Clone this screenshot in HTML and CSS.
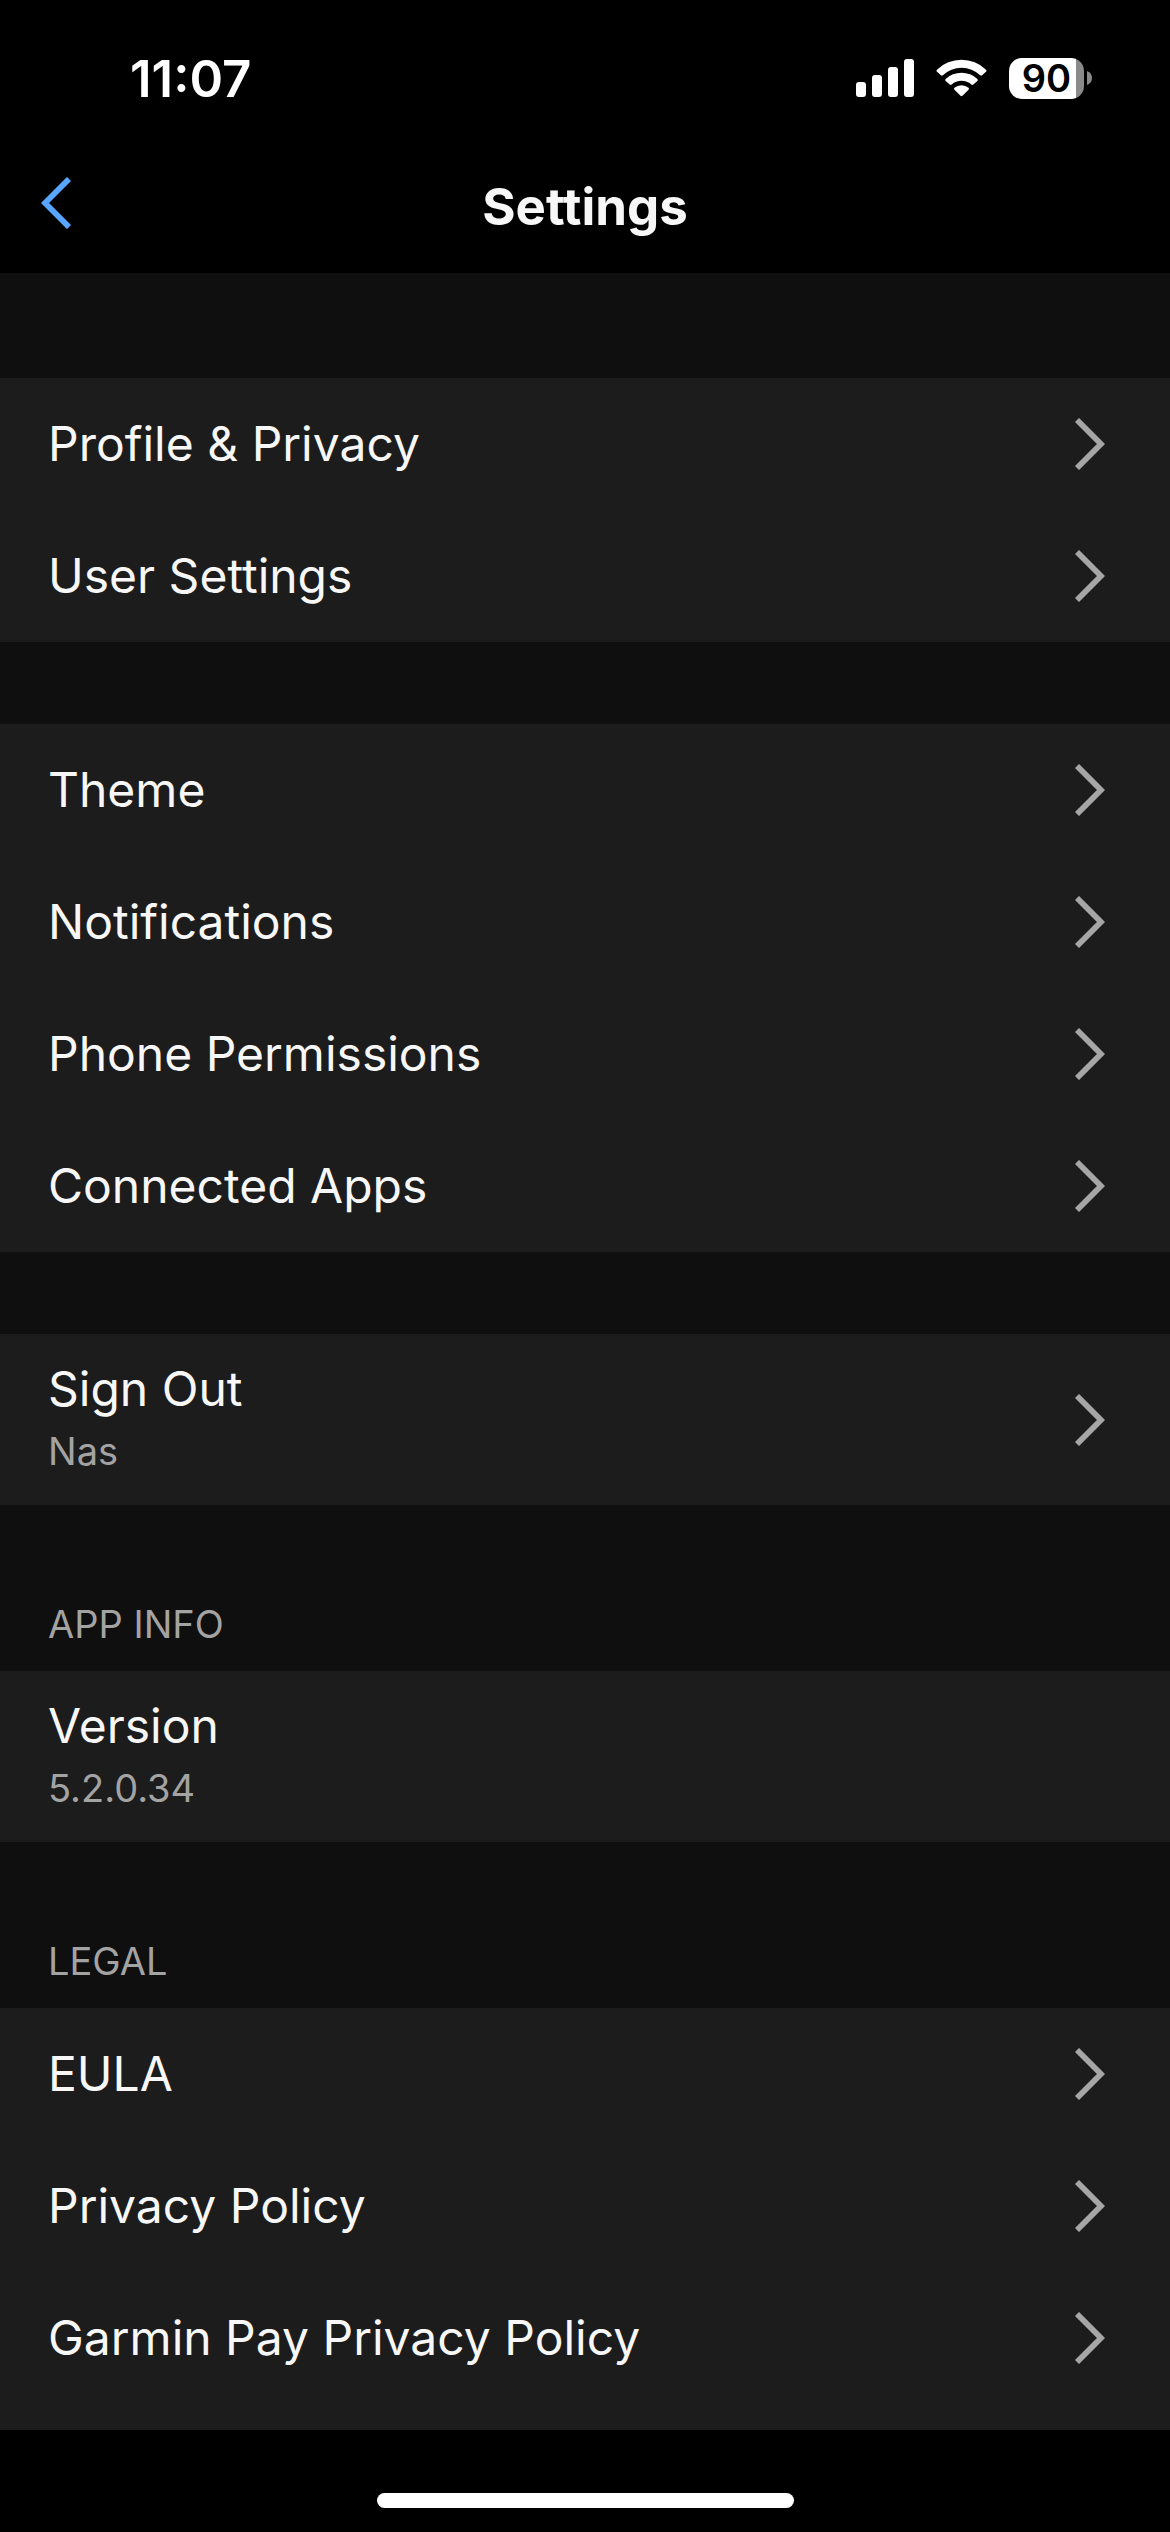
FILE: index.html
```html
<!DOCTYPE html>
<html lang="en">
<head>
  <meta charset="UTF-8" />
  <meta name="viewport" content="width=device-width, initial-scale=1.0"/>
  <title>Settings</title>
  <link rel="stylesheet" href="styles.css">
</head>
<body>
  <!-- one chevron shape shared by every row -->
  <svg class="sprite" aria-hidden="true">
    <symbol id="chevron" viewBox="0 0 30 52">
      <path d="M2 2L26 26L2 50" fill="none" stroke="currentColor" stroke-width="5.8"/>
    </symbol>
  </svg>

  <div class="status-bar">
    <span class="time">11:07</span>
    <div class="status-icons">
      <svg class="signal" viewBox="0 0 58 38" fill="#fff">
        <rect x="0" y="23" width="10" height="15" rx="3"/>
        <rect x="16" y="16" width="10" height="22" rx="3"/>
        <rect x="32" y="8" width="10" height="30" rx="3"/>
        <rect x="48" y="0" width="10" height="38" rx="3"/>
      </svg>
      <svg class="wifi" viewBox="0 0 52 38" fill="#fff">
        <path d="M1 10.5Q0 11.5 1 12.5L5 16.2Q6 17 7 16.2A27.5 27.5 0 0 1 45 16.2Q46 17 47 16.2L51 12.5Q52 11.5 51 10.5A36 36 0 0 0 1 10.5Z"/>
        <path d="M9.8 20Q8.8 21 9.8 22L14 25.7Q15 26.5 16 25.7A15 15 0 0 1 36 25.7Q37 26.5 38 25.7L42.2 22Q43.2 21 42.2 20A23.5 23.5 0 0 0 9.8 20Z"/>
        <path d="M18.8 29Q17.9 30 18.8 31L25 37.2Q26 38.2 27 37.2L33.2 31Q34.1 30 33.2 29A11 11 0 0 0 18.8 29Z"/>
      </svg>
      <div class="battery">
        <span class="battery-level">90</span>
        <svg class="battery-tip" viewBox="0 0 5 14"><path d="M0 0Q5 2 5 7Q5 12 0 14Z" fill="#8a8a8a"/></svg>
      </div>
    </div>
  </div>

  <header class="nav-bar">
    <button class="back" type="button" aria-label="Back">
      <svg class="chevron" viewBox="0 0 30 52"><path d="M28 2L4 26L28 50" fill="none" stroke="currentColor" stroke-width="5.8"/></svg>
    </button>
    <h1>Settings</h1>
  </header>

  <main>
    <section class="group">
      <a class="row" href="#"><span class="label">Profile &amp; Privacy</span><svg class="chevron"><use href="#chevron"/></svg></a>
      <a class="row" href="#"><span class="label">User Settings</span><svg class="chevron"><use href="#chevron"/></svg></a>
    </section>

    <section class="group">
      <a class="row" href="#"><span class="label">Theme</span><svg class="chevron"><use href="#chevron"/></svg></a>
      <a class="row" href="#"><span class="label">Notifications</span><svg class="chevron"><use href="#chevron"/></svg></a>
      <a class="row" href="#"><span class="label">Phone Permissions</span><svg class="chevron"><use href="#chevron"/></svg></a>
      <a class="row" href="#"><span class="label">Connected Apps</span><svg class="chevron"><use href="#chevron"/></svg></a>
    </section>

    <section class="group">
      <a class="row row-tall" href="#">
        <span class="label">Sign Out<small>Nas</small></span>
        <svg class="chevron"><use href="#chevron"/></svg>
      </a>
    </section>

    <h2>APP INFO</h2>
    <section class="group">
      <div class="row row-tall">
        <span class="label">Version<small>5.2.0.34</small></span>
      </div>
    </section>

    <h2>LEGAL</h2>
    <section class="group group-last">
      <a class="row" href="#"><span class="label">EULA</span><svg class="chevron"><use href="#chevron"/></svg></a>
      <a class="row" href="#"><span class="label">Privacy Policy</span><svg class="chevron"><use href="#chevron"/></svg></a>
      <a class="row" href="#"><span class="label">Garmin Pay Privacy Policy</span><svg class="chevron"><use href="#chevron"/></svg></a>
    </section>
  </main>

  <footer class="home-bar">
    <div class="home-indicator"></div>
  </footer>
</body>
</html>
```

FILE: styles.css
```css
* {
  box-sizing: border-box;
}
body {
  font-family: Inter, "Liberation Sans", sans-serif;
  margin: 0;
  min-height: 100vh;
  display: flex;
  flex-direction: column;
  background: #000;
  color: #f7f7f7;
}
.sprite {
  display: none;
}
.status-bar {
  display: flex;
  justify-content: space-between;
  align-items: center;
  height: 156px;
  padding: 0 78px 0 130px;
}
.time {
  font-size: 51px;
  font-weight: 600;
  color: #fff;
}
.status-icons {
  display: flex;
  align-items: center;
  gap: 22px;
}
.signal {
  width: 58px;
  height: 38px;
}
.wifi {
  width: 51px;
  height: 38px;
}
.battery {
  display: flex;
  align-items: center;
  gap: 3px;
}
.battery-level {
  width: 75px;
  border-radius: 13px;
  background: linear-gradient(to right, #fff 90%, #8a8a8a 90%);
  color: #000;
  font-size: 38px;
  font-weight: 600;
  line-height: 41px;
  text-align: center;
}
.battery-tip {
  width: 5px;
  height: 14px;
}
.nav-bar {
  display: grid;
  grid-template-columns: 1fr auto 1fr;
  align-items: center;
  height: 117px;
  padding: 0 41px 15px;
}
.back {
  justify-self: start;
  padding: 0 0 8px;
  border: none;
  background: none;
  color: #58a6ff;
  cursor: pointer;
}
h1 {
  margin: 0;
  font-size: 51px;
  font-weight: 700;
  line-height: 62px;
}
main {
  flex: 1;
  display: flex;
  flex-direction: column;
  padding-top: 105px;
  background: #0f0f0f;
}
.group {
  background: #1c1c1c;
}
.group + .group {
  margin-top: 82px;
}
.group-last {
  flex: 1;
}
.row {
  display: flex;
  justify-content: space-between;
  align-items: center;
  padding: 35px 65px 35px 48px;
  color: inherit;
  text-decoration: none;
}
.row-tall {
  padding-top: 24px;
  padding-bottom: 23px;
}
.label {
  font-size: 48px;
  line-height: 62px;
}
.label small {
  display: block;
  font-size: 38px;
  color: #a3a3a3;
}
.chevron {
  display: block;
  width: 30px;
  height: 52px;
}
.row .chevron {
  color: #a6a6a6;
}
h2 {
  margin: 0;
  padding: 96px 48px 24px;
  font-size: 38px;
  font-weight: 400;
  line-height: 46px;
  color: #a3a3a3;
}
.home-bar {
  display: flex;
  justify-content: center;
  align-items: flex-end;
  height: 102px;
  padding-bottom: 24px;
}
.home-indicator {
  width: 417px;
  height: 15px;
  border-radius: 8px;
  background: #fff;
}
```
